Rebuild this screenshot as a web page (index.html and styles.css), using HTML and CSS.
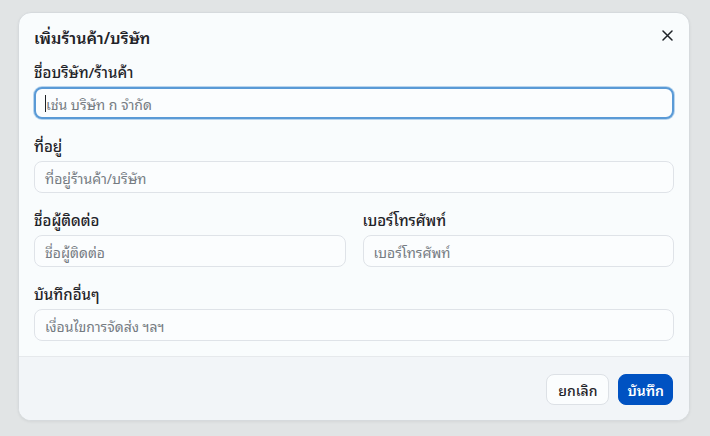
FILE: index.html
```
<!DOCTYPE html>
<html lang="th">
<head>
    <meta charset="UTF-8">
    <meta name="viewport" content="width=device-width, initial-scale=1.0">
    <title>เพิ่มร้านค้า/บริษัท</title>
    <link rel="stylesheet" href="styles.css">
</head>
<body>

<div class="modal">
    <div class="modal-body">
        <div class="modal-header">
            <h2 class="modal-title">เพิ่มร้านค้า/บริษัท</h2>
            <button class="close-btn" aria-label="ปิด">
                <svg width="11" height="11" viewBox="0 0 11 11">
                    <path d="M1 1 L10 10 M10 1 L1 10" stroke="#1f2328" stroke-width="1.5" stroke-linecap="round"/>
                </svg>
            </button>
        </div>

        <!-- company name -->
        <div class="field">
            <label class="label">ชื่อบริษัท/ร้านค้า</label>
            <div class="input input-focus"><span class="caret"></span><span class="placeholder">เช่น บริษัท ก จำกัด</span></div>
        </div>

        <!-- address -->
        <div class="field">
            <label class="label">ที่อยู่</label>
            <div class="input"><span class="placeholder">ที่อยู่ร้านค้า/บริษัท</span></div>
        </div>

        <!-- contact + phone -->
        <div class="field-row">
            <div class="field">
                <label class="label">ชื่อผู้ติดต่อ</label>
                <div class="input"><span class="placeholder">ชื่อผู้ติดต่อ</span></div>
            </div>
            <div class="field">
                <label class="label">เบอร์โทรศัพท์</label>
                <div class="input"><span class="placeholder">เบอร์โทรศัพท์</span></div>
            </div>
        </div>

        <!-- notes -->
        <div class="field">
            <label class="label">บันทึกอื่นๆ</label>
            <div class="input"><span class="placeholder">เงื่อนไขการจัดส่ง ฯลฯ</span></div>
        </div>
    </div>

    <div class="modal-footer">
        <button class="btn btn-cancel">ยกเลิก</button>
        <button class="btn btn-save">บันทึก</button>
    </div>
</div>

</body>
</html>
```

FILE: styles.css
```
body {
    margin: 0;
    padding: 12px 20px 15px 18px;
    background-color: #e1e4e5;
    font-family: 'Noto Sans Thai Looped', 'Noto Sans', sans-serif;
    color: #1f2328;
}

.modal {
    background-color: #f9fcfd;
    border: 1px solid #d6dadd;
    border-radius: 13px;
    overflow: hidden;
    box-shadow: 0 1px 3px rgba(0, 0, 0, 0.06);
}

.modal-body {
    padding: 13px 15px 15px 15px;
}

.modal-header {
    display: flex;
    justify-content: space-between;
    align-items: flex-start;
    height: 22px;
    margin-bottom: 13px;
}

.modal-title {
    margin: 0;
    font-size: 16px;
    font-weight: 600;
    line-height: 22px;
}

.close-btn {
    background: none;
    border: none;
    padding: 0;
    margin: 2px 0 0 0;
    width: 14px;
    height: 14px;
    display: flex;
    align-items: center;
    justify-content: center;
}

.field {
    display: flex;
    flex-direction: column;
    margin-bottom: 16px;
}

.field:last-child {
    margin-bottom: 0;
}

.field-row {
    display: grid;
    grid-template-columns: 1fr 1fr;
    gap: 17px;
    margin-bottom: 16px;
}

.field-row .field {
    margin-bottom: 0;
}

.label {
    font-size: 15px;
    font-weight: 500;
    line-height: 20px;
    margin-bottom: 6px;
}

.input {
    height: 30px;
    border: 1px solid #dfe3e8;
    border-radius: 8px;
    background-color: #fbfdfe;
    display: flex;
    align-items: center;
    padding: 0 10px;
    font-size: 14px;
}

.input-focus {
    border: 2px solid #5a9ad6;
    height: 28px;
    padding: 0 10px 0 9px;
    box-shadow: 0 0 0 1px #b8d5ee;
}

.caret {
    width: 1px;
    height: 17px;
    background-color: #1f2328;
}

.placeholder {
    color: #757b82;
}

.modal-footer {
    background-color: #f2f5f8;
    border-top: 1px solid #e6e9ec;
    display: flex;
    justify-content: flex-end;
    gap: 9px;
    padding: 17px 16px 15px 16px;
}

.btn {
    height: 31px;
    border-radius: 8px;
    font-family: 'Noto Sans Thai Looped', 'Noto Sans', sans-serif;
    font-size: 14px;
    font-weight: 500;
    padding: 0 11px;
    cursor: pointer;
}

.btn-cancel {
    background-color: #fbfdfe;
    border: 1px solid #dde1e6;
    color: #1f2328;
}

.btn-save {
    background-color: #0052c2;
    border: 1px solid #0052c2;
    color: #ffffff;
    font-weight: 600;
    padding: 0 8px;
}
```
